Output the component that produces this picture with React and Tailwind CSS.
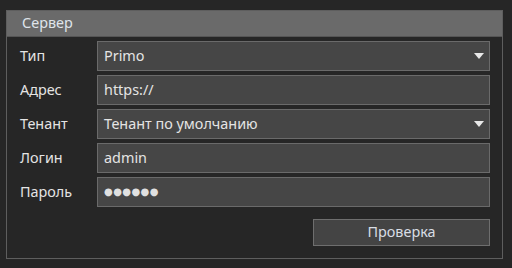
const rows = [
  { label: 'Тип', value: 'Primo', select: true },
  { label: 'Адрес', value: 'https://' },
  { label: 'Тенант', value: 'Тенант по умолчанию', select: true },
  { label: 'Логин', value: 'admin' },
  { label: 'Пароль', value: '●●●●●●', password: true },
];

const Arrow = () => (
  <svg width="10" height="6" viewBox="0 0 10 6" className="shrink-0">
    <path d="M0 0 H10 L5 6 Z" fill="#e8e8e8" />
  </svg>
);

export default function App() {
  return (
    <div
      className="w-[512px] h-[268px] bg-[#262626] pt-[10px] px-[6px] text-[14.4px] text-[#e4e4e4]"
      style={{ fontFamily: '"Noto Sans", "Open Sans", sans-serif' }}
    >
      <div className="h-[249px] w-[497px] border border-[#5e5e5e] flex flex-col">
        {/* Header */}
        <div className="h-[26px] bg-[#6a6a6a] border-b border-[#555] flex items-center pl-[15px] text-[#dfe4ea] leading-none">
          Сервер
        </div>

        {/* Fields */}
        <div className="flex flex-col gap-[4px] pt-[4px] pl-[13px] pr-[12px]">
          {rows.map((row) => (
            <div key={row.label} className="flex items-center h-[30px]">
              <div className="w-[77px] leading-none">{row.label}</div>
              <div className="flex-1 h-full bg-[#464646] border border-[#6a6a6a] flex items-center justify-between pl-[6px] pr-[5px]">
                <span
                  className={
                    row.password
                      ? 'text-[10px] tracking-[0.4px] text-[#e0e0e0] leading-none'
                      : 'leading-none'
                  }
                  style={row.password ? { fontFamily: '"DejaVu Sans", sans-serif' } : undefined}
                >
                  {row.value}
                </span>
                {row.select && <Arrow />}
              </div>
            </div>
          ))}
        </div>

        <div className="flex justify-end pr-[12px] pt-[12px]">
          <button className="w-[177px] h-[27px] bg-[#444] border border-[#6e6e6e] text-[#d8dde4] leading-none">
            Проверка
          </button>
        </div>
      </div>
    </div>
  );
}
